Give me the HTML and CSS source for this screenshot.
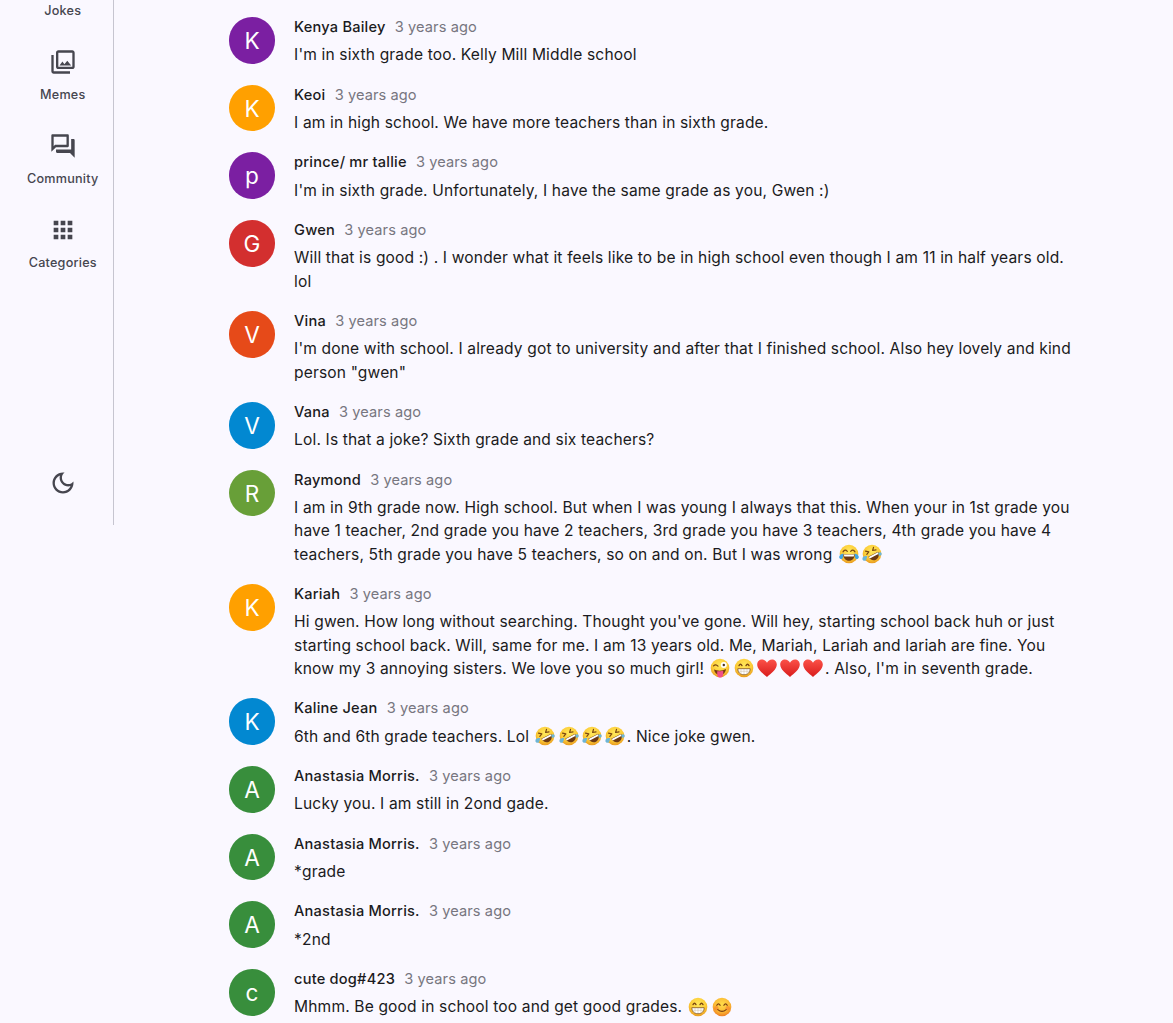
FILE: index.html
```html
<!DOCTYPE html>
<html lang="en">
<head>
    <meta charset="UTF-8">
    <meta name="viewport" content="width=device-width, initial-scale=1.0">
    <title>Comments</title>
    <link rel="stylesheet" href="styles.css">
</head>
<body>
<!-- Emoji symbols -->
<svg class="symbols" aria-hidden="true">
    <defs>
        <radialGradient id="face" cx="50%" cy="35%" r="65%">
            <stop offset="0" stop-color="#ffe95c"/>
            <stop offset="0.65" stop-color="#fccb37"/>
            <stop offset="1" stop-color="#e99a20"/>
        </radialGradient>
        <radialGradient id="warm" cx="50%" cy="35%" r="65%">
            <stop offset="0" stop-color="#ffdc4a"/>
            <stop offset="0.65" stop-color="#fbb834"/>
            <stop offset="1" stop-color="#ee7d22"/>
        </radialGradient>
        <linearGradient id="red" x1="0" y1="0" x2="0" y2="1">
            <stop offset="0" stop-color="#fb5148"/>
            <stop offset="1" stop-color="#d91c1c"/>
        </linearGradient>
    </defs>
    <symbol id="joy" viewBox="0 0 20 20">
        <circle cx="10" cy="10" r="9.3" fill="url(#face)"/>
        <path d="M4 7.8q2-3 4.3-.5M11.7 7.3q2.3-2.5 4.3.5" fill="none" stroke="#7a4611" stroke-width="1.2" stroke-linecap="round"/>
        <path d="M4.2 10.2h11.6c0 4-2.5 6.5-5.8 6.5s-5.8-2.5-5.8-6.5z" fill="#6d3a13"/>
        <path d="M4.8 10.5h10.4l-.5 2H5.3z" fill="#fff"/>
        <path d="M4.5 9.5C1.5 9.8-.3 12 .3 13.8c.6 1.7 3 1.7 3.6 0zM15.5 9.5c3 .3 4.8 2.5 4.2 4.3-.6 1.7-3 1.7-3.6 0z" fill="#3fa4e4"/>
    </symbol>
    <symbol id="rofl" viewBox="0 0 20 20">
        <circle cx="10" cy="10" r="9.3" fill="url(#face)"/>
        <path d="M3.5 7.2l3.3.7-2 2.5M11.5 3.3l-.9 3.2 3.4-.6" fill="none" stroke="#7a4611" stroke-width="1.2" stroke-linecap="round" stroke-linejoin="round"/>
        <path d="M6.3 12.8l9.8-5c1.5 3.3.5 6.5-2.1 7.9-2.7 1.4-6 .3-7.7-2.9z" fill="#6d3a13"/>
        <path d="M6.7 12.9l9.2-4.7.4 1.8-8.5 4.4z" fill="#fff"/>
        <path d="M5.3 12.3C2.400 11.6.3 13 .4 15c.1 1.800 2.300 2.500 3.600 1.200zM16.200 9c1.800-1.200 3.300-.6 3.500.8.200 1.500-1.500 2.500-2.800 1.600z" fill="#6db5d6"/>
    </symbol>
    <symbol id="wink" viewBox="0 0 20 20">
        <circle cx="10" cy="10" r="9.3" fill="url(#face)"/>
        <path d="M3.5 7.9q2.2-2.2 4.5.2" fill="none" stroke="#7a4611" stroke-width="1.2" stroke-linecap="round"/>
        <circle cx="13.8" cy="7" r="3" fill="#fff"/>
        <circle cx="13.8" cy="7" r="1.2" fill="#4b3422"/>
        <path d="M4 11.5q6 2.5 12-.5c-.5 4-2.8 5.8-6 5.8s-5.5-2-6-5.3z" fill="#77380f"/>
        <path d="M7.2 13.2q3.2 0 6-.5v3.5c0 4.500-5.800 4.500-6 .2z" fill="#f14f87"/>
    </symbol>
    <symbol id="grin" viewBox="0 0 20 20">
        <circle cx="10" cy="10" r="9.3" fill="url(#face)"/>
        <path d="M5 7.6q1.5-2.7 3 0M12 7.6q1.5-2.7 3 0" fill="none" stroke="#7a4611" stroke-width="1.3" stroke-linecap="round"/>
        <path d="M3.8 10.7h12.4c0 3.7-2.4 6-6.2 6s-6.2-2.3-6.2-6z" fill="#fff" stroke="#81501c" stroke-width=".8"/>
        <path d="M4.5 13.3h11M7 11v4.8M10 11v5.5M13 11v4.8" stroke="#c9bba2" stroke-width=".5"/>
    </symbol>
    <symbol id="smile" viewBox="0 0 20 20">
        <circle cx="10" cy="10" r="9.3" fill="url(#warm)"/>
        <circle cx="4.3" cy="11.3" r="2.2" fill="#f36b2b" opacity=".45"/>
        <circle cx="15.7" cy="11.3" r="2.2" fill="#f36b2b" opacity=".45"/>
        <path d="M4.8 8.3q1.7-3 3.3 0M11.9 8.3q1.7-3 3.3 0M5.8 12.6q4.2 3.5 8.4 0" fill="none" stroke="#7a3d11" stroke-width="1.2" stroke-linecap="round"/>
    </symbol>
    <symbol id="heart" viewBox="0 0 20 20">
        <path d="M10 18.9C6 15.5.2 11.5.2 6.5c0-3 2.2-5 4.8-5 2.2 0 4.1 1.300 5 3.300.9-2 2.800-3.300 5-3.300 2.600 0 4.800 2 4.800 5 0 5-5.800 9-9.800 12.400z" fill="url(#red)"/>
    </symbol>
</svg>

<div class="page">
    <nav class="sidebar">
        <a class="nav-item first"><span>Jokes</span></a>
        <a class="nav-item">
            <svg viewBox="0 0 24 24"><path d="M20 4v12H8V4h12m0-2H8c-1.1 0-2 .9-2 2v12c0 1.1.9 2 2 2h12c1.1 0 2-.9 2-2V4c0-1.1-.9-2-2-2zm-8.5 9.67l1.69 2.26 2.48-3.1L19 15H9zM2 6v14c0 1.1.9 2 2 2h14v-2H4V6H2z"/></svg>
            <span>Memes</span>
        </a>
        <a class="nav-item">
            <svg viewBox="0 0 24 24"><path d="M15 4v7H5.17L4 12.17V4h11m1-2H3c-.55 0-1 .45-1 1v14l4-4h10c.55 0 1-.45 1-1V3c0-.55-.45-1-1-1zm5 4h-2v9H6v2c0 .55.45 1 1 1h11l4 4V7c0-.55-.45-1-1-1z"/></svg>
            <span>Community</span>
        </a>
        <a class="nav-item">
            <svg viewBox="0 0 24 24"><path d="M4 8h4V4H4v4zm6 12h4v-4h-4v4zm-6 0h4v-4H4v4zm0-6h4v-4H4v4zm6 0h4v-4h-4v4zm6-10v4h4V4h-4zm-6 4h4V4h-4v4zm6 6h4v-4h-4v4zm0 6h4v-4h-4v4z"/></svg>
            <span>Categories</span>
        </a>
        <a class="theme-toggle">
            <svg viewBox="0 0 24 24"><path d="M9.37 5.51c-.18.64-.27 1.31-.27 1.99 0 4.08 3.32 7.4 7.4 7.4.68 0 1.35-.09 1.99-.27C17.45 17.19 14.93 19 12 19c-3.86 0-7-3.14-7-7 0-2.93 1.81-5.45 4.37-6.49zM12 3c-4.97 0-9 4.03-9 9s4.03 9 9 9 9-4.03 9-9c0-.46-.04-.92-.1-1.36-.98 1.37-2.58 2.26-4.4 2.26-2.98 0-5.4-2.42-5.4-5.4 0-1.81.89-3.42 2.26-4.4C12.92 3.04 12.46 3 12 3z"/></svg>
        </a>
    </nav>

    <main class="comments">
        <article class="comment">
            <div class="avatar purple">K</div>
            <div class="body">
                <header><b>Kenya Bailey</b><time>3 years ago</time></header>
                <p>I'm in sixth grade too. Kelly Mill Middle school</p>
            </div>
        </article>
        <article class="comment">
            <div class="avatar amber">K</div>
            <div class="body">
                <header><b>Keoi</b><time>3 years ago</time></header>
                <p>I am in high school. We have more teachers than in sixth grade.</p>
            </div>
        </article>
        <article class="comment">
            <div class="avatar purple">p</div>
            <div class="body">
                <header><b>prince/ mr tallie</b><time>3 years ago</time></header>
                <p>I'm in sixth grade. Unfortunately, I have the same grade as you, Gwen :)</p>
            </div>
        </article>
        <article class="comment">
            <div class="avatar red">G</div>
            <div class="body">
                <header><b>Gwen</b><time>3 years ago</time></header>
                <p>Will that is good :) . I wonder what it feels like to be in high school even though I am 11 in half years old. lol</p>
            </div>
        </article>
        <article class="comment">
            <div class="avatar orange">V</div>
            <div class="body">
                <header><b>Vina</b><time>3 years ago</time></header>
                <p>I'm done with school. I already got to university and after that I finished school. Also hey lovely and kind person "gwen"</p>
            </div>
        </article>
        <article class="comment">
            <div class="avatar blue">V</div>
            <div class="body">
                <header><b>Vana</b><time>3 years ago</time></header>
                <p>Lol. Is that a joke? Sixth grade and six teachers?</p>
            </div>
        </article>
        <article class="comment">
            <div class="avatar lime">R</div>
            <div class="body">
                <header><b>Raymond</b><time>3 years ago</time></header>
                <p>I am in 9th grade now. High school. But when I was young I always that this. When your in 1st grade you have 1 teacher, 2nd grade you have 2 teachers, 3rd grade you have 3 teachers, 4th grade you have 4 teachers, 5th grade you have 5 teachers, so on and on. But I was wrong <svg class="emoji"><use href="#joy"/></svg><svg class="emoji"><use href="#rofl"/></svg></p>
            </div>
        </article>
        <article class="comment">
            <div class="avatar amber">K</div>
            <div class="body">
                <header><b>Kariah</b><time>3 years ago</time></header>
                <p>Hi gwen. How long without searching. Thought you've gone. Will hey, starting school back huh or just starting school back. Will, same for me. I am 13 years old. Me, Mariah, Lariah and lariah are fine. You know my 3 annoying sisters. We love you so much girl! <svg class="emoji"><use href="#wink"/></svg><svg class="emoji"><use href="#grin"/></svg><svg class="emoji"><use href="#heart"/></svg><svg class="emoji"><use href="#heart"/></svg><svg class="emoji"><use href="#heart"/></svg>. Also, I'm in seventh grade.</p>
            </div>
        </article>
        <article class="comment">
            <div class="avatar blue">K</div>
            <div class="body">
                <header><b>Kaline Jean</b><time>3 years ago</time></header>
                <p>6th and 6th grade teachers. Lol <svg class="emoji"><use href="#rofl"/></svg><svg class="emoji"><use href="#rofl"/></svg><svg class="emoji"><use href="#rofl"/></svg><svg class="emoji"><use href="#rofl"/></svg>. Nice joke gwen.</p>
            </div>
        </article>
        <article class="comment">
            <div class="avatar green">A</div>
            <div class="body">
                <header><b>Anastasia Morris.</b><time>3 years ago</time></header>
                <p>Lucky you. I am still in 2ond gade.</p>
            </div>
        </article>
        <article class="comment">
            <div class="avatar green">A</div>
            <div class="body">
                <header><b>Anastasia Morris.</b><time>3 years ago</time></header>
                <p>*grade</p>
            </div>
        </article>
        <article class="comment">
            <div class="avatar green">A</div>
            <div class="body">
                <header><b>Anastasia Morris.</b><time>3 years ago</time></header>
                <p>*2nd</p>
            </div>
        </article>
        <article class="comment">
            <div class="avatar green">c</div>
            <div class="body">
                <header><b>cute dog#423</b><time>3 years ago</time></header>
                <p>Mhmm. Be good in school too and get good grades. <svg class="emoji"><use href="#grin"/></svg><svg class="emoji"><use href="#smile"/></svg></p>
            </div>
        </article>
    </main>
</div>
</body>
</html>
```
FILE: styles.css
```css
/* Global Styles */
* {
    box-sizing: border-box;
}

body {
    margin: 0;
    height: 1023px;
    overflow: hidden;
    background: #faf8ff;
    color: #1b1b21;
    font-family: Inter, sans-serif;
}

.symbols {
    display: block;
    width: 0;
    height: 0;
}

.page {
    display: flex;
    align-items: flex-start;
}

/* Sidebar */
.sidebar {
    display: flex;
    flex-direction: column;
    width: 114px;
    height: 525px;
    padding: 3px 0 28.5px 12.5px;
    border-right: 1px solid #c6c5d0;
    color: #46464f;
}

.sidebar svg {
    display: block;
    width: 28px;
    height: 28px;
    fill: currentColor;
}

.nav-item {
    display: flex;
    flex-direction: column;
    align-items: center;
    gap: 11px;
    margin-top: 29px;
    font-size: 12.64px;
    font-weight: 500;
    line-height: 16px;
    letter-spacing: 0.22px;
}

.nav-item.first {
    margin-top: 0;
}

.theme-toggle {
    margin: auto auto 0;
}

/* Comments */
.comments {
    width: 852px;
    margin-left: 114.7px;
    padding-top: 17px;
}

.comment {
    display: flex;
    gap: 18.7px;
    padding-bottom: 18px;
}

.avatar {
    flex: none;
    width: 46.7px;
    height: 46.7px;
    border-radius: 50%;
    color: #fff;
    font-size: 22.6px;
    line-height: 48px;
    text-align: center;
}

.purple { background: #7b1fa2; }
.amber { background: #ffa000; }
.red { background: #d32f2f; }
.orange { background: #e64a19; }
.blue { background: #0288d1; }
.lime { background: #689f38; }
.green { background: #388e3c; }

.body {
    flex: 1;
    padding-top: 1.1px;
}

.comment header {
    display: flex;
    gap: 9.2px;
    margin-bottom: 5.4px;
    font-size: 14.58px;
    line-height: 19.85px;
    letter-spacing: 0.22px;
}

.comment b {
    font-weight: 500;
}

.comment time {
    color: #777680;
    letter-spacing: 0.1px;
}

.comment p {
    margin: 0;
    font-size: 15.56px;
    line-height: 23.33px;
    letter-spacing: 0.155px;
}

.emoji {
    display: inline-block;
    width: 20px;
    height: 20px;
    margin: 0 1.65px;
    vertical-align: -4.5px;
}
```
